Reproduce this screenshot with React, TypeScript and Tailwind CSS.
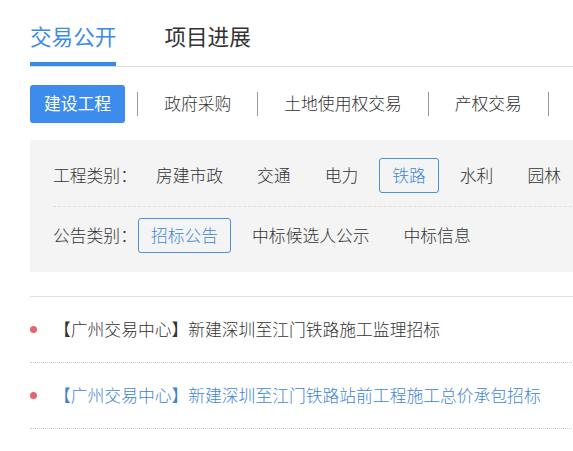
import React from "react";

const font = { fontFamily: '"Noto Sans CJK SC", "Noto Sans", sans-serif' };

export default function App() {
  const cats = ["房建市政", "交通", "电力", "铁路", "水利", "园林"];
  const notices = ["招标公告", "中标候选人公示", "中标信息"];
  return (
    <div className="w-[573px] h-[451px] overflow-hidden bg-white text-[#333] font-light" style={font}>
      <div className="ml-[30px] w-[700px]">
        {/* top tabs */}
        <div className="flex border-b border-[#dcdcdc] gap-[48px]">
          <div className="pt-[20px] pb-[10px] leading-[32px] text-[21.6px] font-normal text-[#3b8be4] border-b-4 border-[#3b8be4]">
            交易公开
          </div>
          <div className="pt-[20px] pb-[10px] leading-[32px] text-[21.6px] font-normal text-[#333] border-b-4 border-transparent">
            项目进展
          </div>
        </div>

        {/* second nav */}
        <div className="flex items-center mt-[18px] text-[16.8px]">
          <div className="h-[38px] px-[14px] flex items-center rounded-[3px] bg-[#3d8ceb] text-white font-normal">建设工程</div>
          <div className="mx-[12px] w-px h-[24px] bg-[#999]" />
          <div className="h-[38px] px-[14px] flex items-center text-[#333]">政府采购</div>
          <div className="mx-[12px] w-px h-[24px] bg-[#999]" />
          <div className="h-[38px] px-[14px] flex items-center text-[#333]">土地使用权交易</div>
          <div className="mx-[12px] w-px h-[24px] bg-[#999]" />
          <div className="h-[38px] px-[14px] flex items-center text-[#333]">产权交易</div>
          <div className="mx-[12px] w-px h-[24px] bg-[#999]" />
        </div>

        {/* filter panel */}
        <div className="mt-[17px] bg-[#f4f4f5] pt-[18px] pb-[19px] px-[23px] text-[16.8px]">
          <div className="flex items-center h-[35px]">
            <span className="mr-[6px] text-[#333]">工程类别：</span>
            <div className="flex gap-[8px]">
              {cats.map((c) =>
                c === "铁路" ? (
                  <span key={c} className="h-[35px] px-[12px] flex items-center border border-[#4d8fd9] rounded-[3px] text-[#3f86d8]">
                    {c}
                  </span>
                ) : (
                  <span key={c} className="h-[35px] px-[12px] flex items-center border border-transparent text-[#333]">
                    {c}
                  </span>
                )
              )}
            </div>
          </div>
          <div className="mt-[13px] border-t border-dashed border-[#dedede] pt-[11px]">
            <div className="flex items-center h-[35px]">
              <span className="mr-[1px] text-[#333]">公告类别：</span>
              <div className="flex gap-[8px]">
                {notices.map((c) =>
                  c === "招标公告" ? (
                    <span key={c} className="h-[35px] px-[12px] flex items-center border border-[#4d8fd9] rounded-[3px] text-[#3f86d8]">
                      {c}
                    </span>
                  ) : (
                    <span key={c} className="h-[35px] px-[12px] flex items-center border border-transparent text-[#333]">
                      {c}
                    </span>
                  )
                )}
              </div>
            </div>
          </div>
        </div>

        {/* list */}
        <div className="mt-[24px] border-t border-[#e0e0e0] text-[16.8px]">
          <div className="h-[66px] flex items-center border-b border-dotted border-[#c8c8c8]">
            <span className="w-[7px] h-[7px] rounded-full bg-[#e8646c]" />
            <span className="ml-[17px] text-[#333]">【广州交易中心】新建深圳至江门铁路施工监理招标</span>
          </div>
          <div className="h-[66px] flex items-center border-b border-dotted border-[#c8c8c8]">
            <span className="w-[7px] h-[7px] rounded-full bg-[#e8646c]" />
            <span className="ml-[17px] text-[#3d84d6]">【广州交易中心】新建深圳至江门铁路站前工程施工总价承包招标</span>
          </div>
        </div>
      </div>
    </div>
  );
}
